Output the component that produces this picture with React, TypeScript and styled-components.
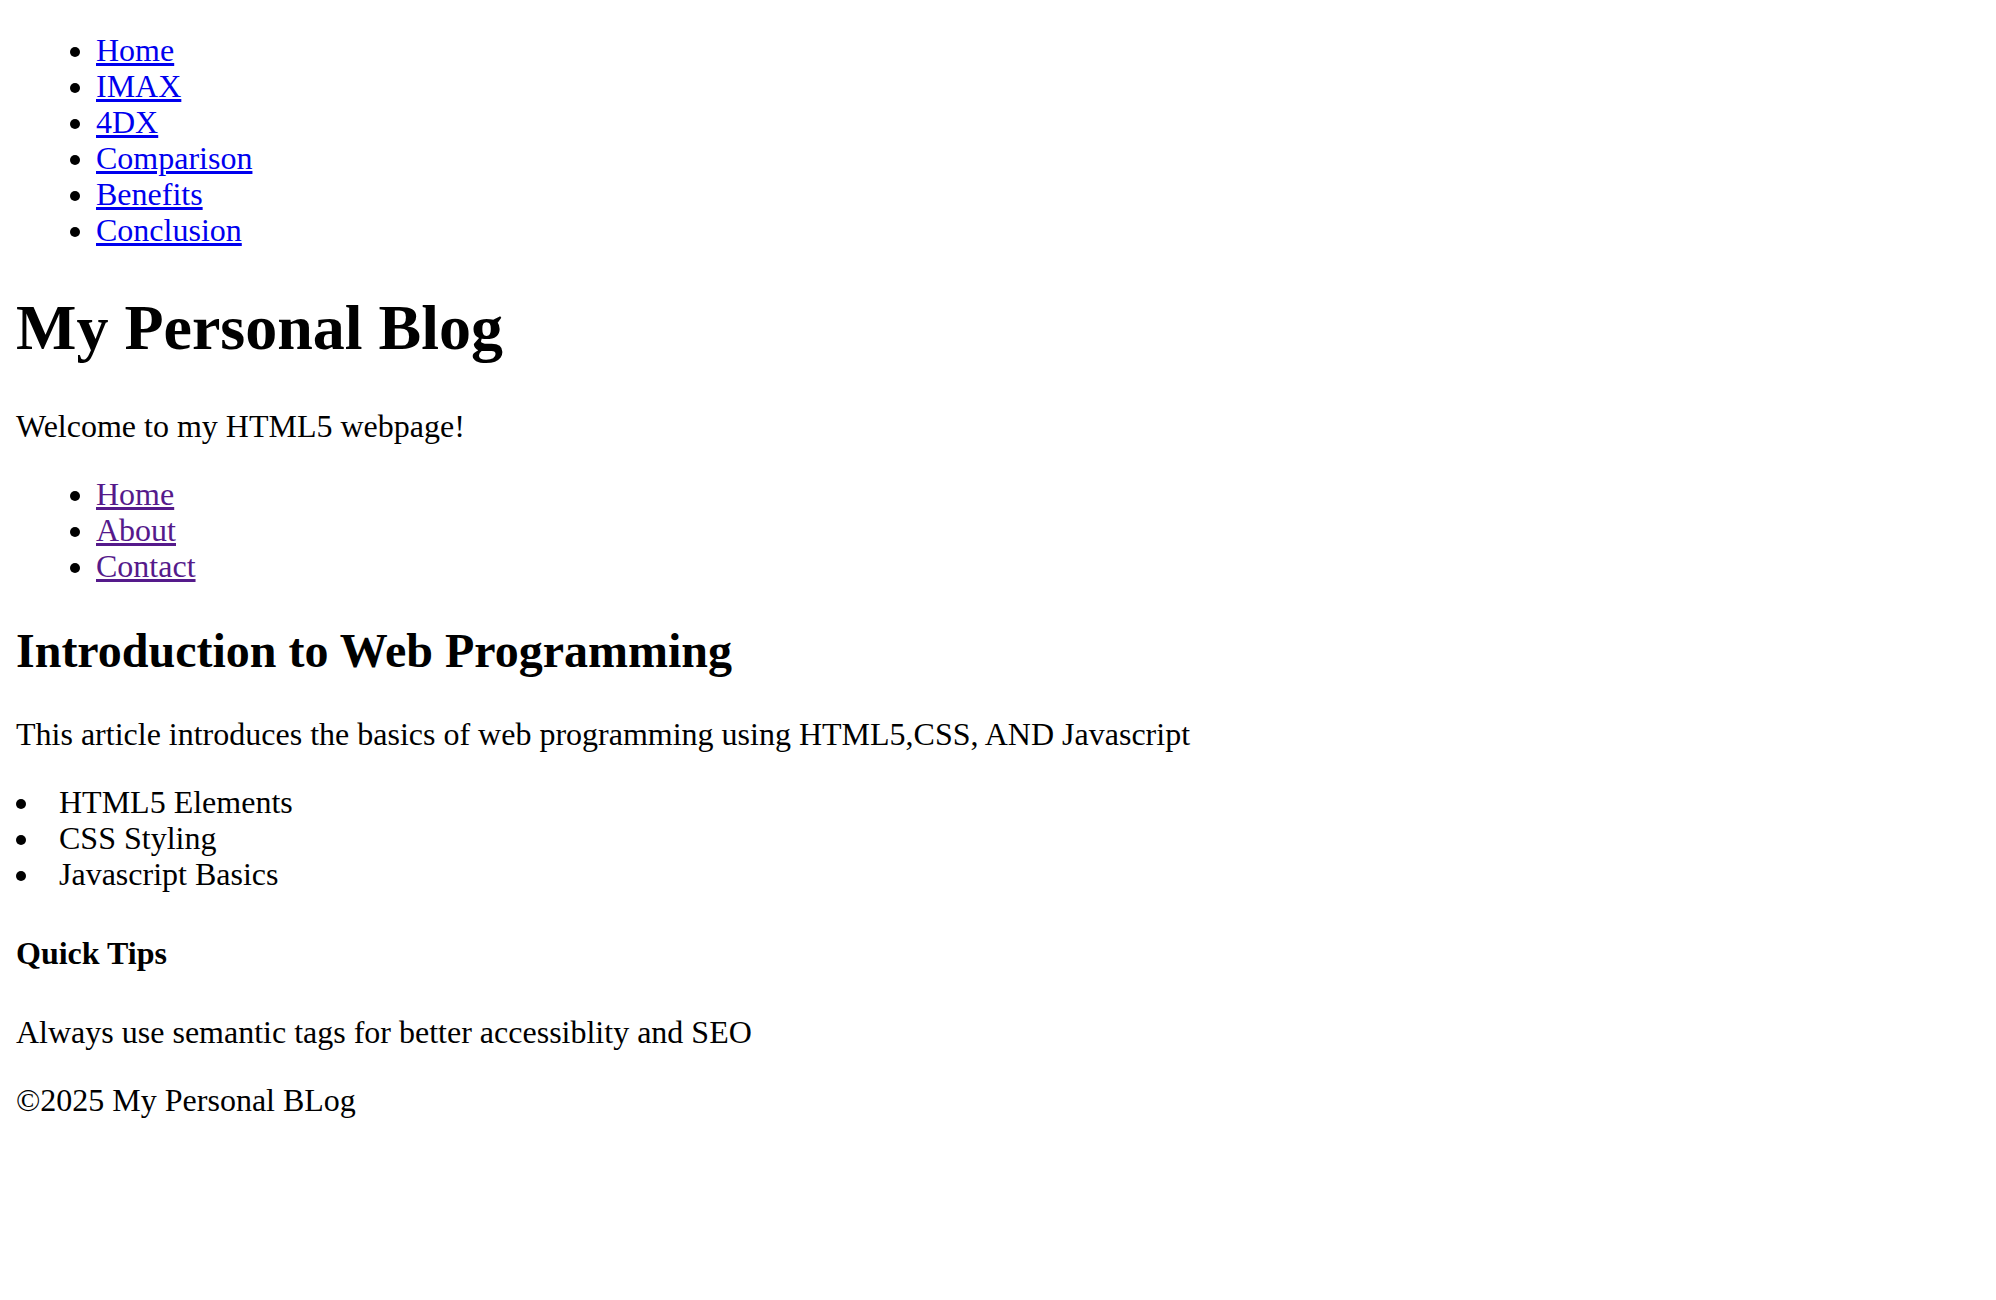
import React from "react";
import styled, { createGlobalStyle } from "styled-components";

const GlobalStyle = createGlobalStyle`
  html, body {
    background: #ffffff;
  }
  body {
    margin: 0;
    font-family: "Liberation Serif", "Times New Roman", serif;
    font-size: 32px;
    line-height: 36px;
    color: #000000;
  }
`;

const Page = styled.div`
  display: flow-root;
  padding: 0 16px 16px;
`;

const NavList = styled.ul`
  display: block;
  list-style-type: disc;
  margin: 32px 0;
  padding-left: 80px;
`;

const ContentList = styled.ul<{ $inside?: boolean }>`
  display: block;
  list-style-type: disc;
  list-style-position: ${(p) => (p.$inside ? "inside" : "outside")};
  margin: 32px 0;
  padding-left: ${(p) => (p.$inside ? "0" : "80px")};
`;

const Item = styled.li`
  display: list-item;
`;

const NavLink = styled.a<{ $visited?: boolean }>`
  color: ${(p) => (p.$visited ? "#551a8b" : "#0000ee")};
  text-decoration: underline;
  cursor: pointer;
`;

const Title = styled.h1`
  font-size: 64px;
  line-height: 74px;
  font-weight: bold;
  margin: 0.67em 0;
`;

const SectionTitle = styled.h2`
  font-size: 48px;
  line-height: 53px;
  font-weight: bold;
  margin: 0.83em 0;
`;

const SubTitle = styled.h4`
  font-size: 32px;
  line-height: 36px;
  font-weight: bold;
  margin: 1.33em 0;
`;

const Paragraph = styled.p`
  margin: 1em 0;
`;

const Footer = styled.footer`
  display: block;
`;

const topLinks = ["Home", "IMAX", "4DX", "Comparison", "Benefits", "Conclusion"];
const siteLinks = ["Home", "About", "Contact"];
const topics = ["HTML5 Elements", "CSS Styling", "Javascript Basics"];

export default function App() {
  return (
    <Page>
      <GlobalStyle />
      <nav>
        <NavList>
          {topLinks.map((l) => (
            <Item key={l}>
              <NavLink href="#">{l}</NavLink>
            </Item>
          ))}
        </NavList>
      </nav>
      <header>
        <Title>My Personal Blog</Title>
        <Paragraph>Welcome to my HTML5 webpage!</Paragraph>
        <nav>
          <NavList>
            {siteLinks.map((l) => (
              <Item key={l}>
                <NavLink href="#" $visited>
                  {l}
                </NavLink>
              </Item>
            ))}
          </NavList>
        </nav>
      </header>
      <main>
        <article>
          <SectionTitle>Introduction to Web Programming</SectionTitle>
          <Paragraph>
            This article introduces the basics of web programming using HTML5,CSS, AND Javascript
          </Paragraph>
          <ContentList $inside>
            {topics.map((t) => (
              <Item key={t}>{t}</Item>
            ))}
          </ContentList>
        </article>
        <aside>
          <SubTitle>Quick Tips</SubTitle>
          <Paragraph>Always use semantic tags for better accessiblity and SEO</Paragraph>
        </aside>
      </main>
      <Footer>
        <Paragraph>©2025 My Personal BLog</Paragraph>
      </Footer>
    </Page>
  );
}
